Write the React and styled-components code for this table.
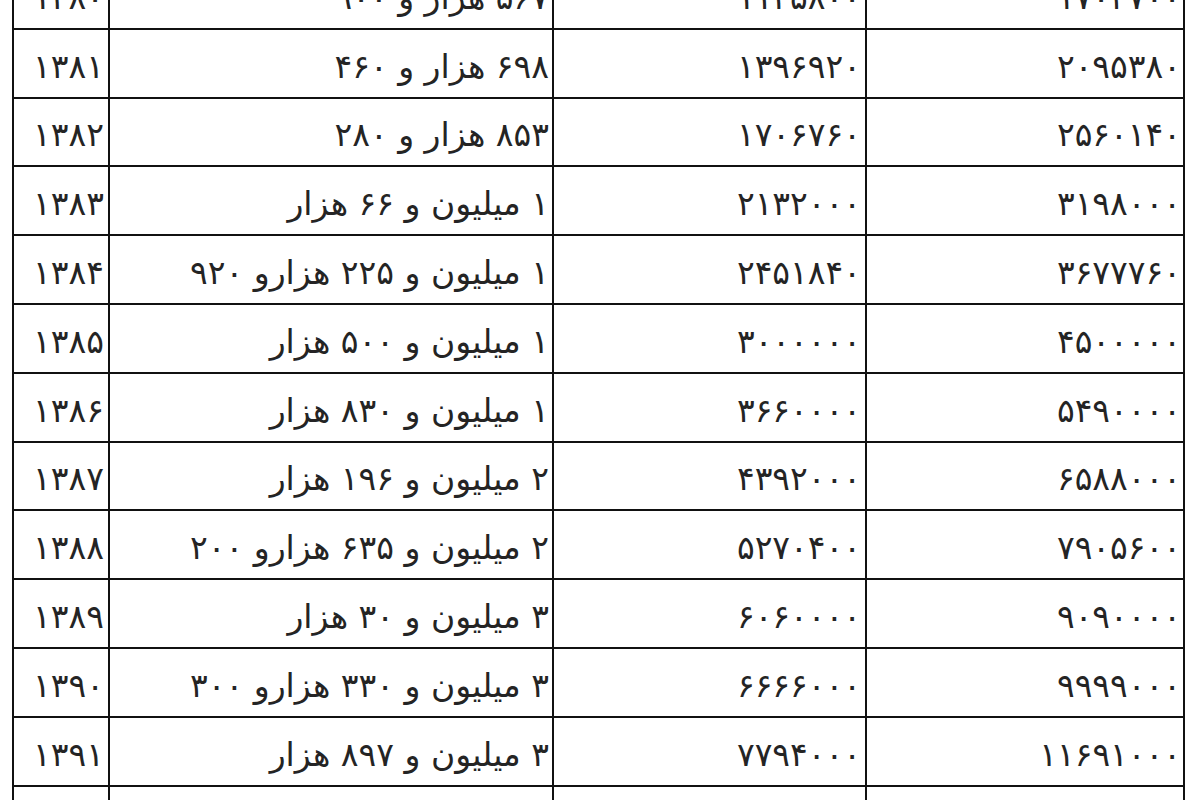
import React from "react";
import styled, { createGlobalStyle } from "styled-components";

const Global = createGlobalStyle`
  html, body { margin: 0; padding: 0; background: #fff; }
  body { width: 1200px; height: 800px; overflow: hidden; }
`;

const Page = styled.div`
  width: 1200px;
  height: 800px;
  overflow: hidden;
  background: #fff;
  padding-left: 12px;
  box-sizing: border-box;
`;

const Table = styled.table`
  margin-top: -41px;
  border-collapse: collapse;
  table-layout: fixed;
  width: 1172px;
  font-family: "DejaVu Sans", "Noto Sans", sans-serif;
  color: #242424;
`;

const Col = styled.col`
  width: ${(p) => p.$w}px;
`;

const Row = styled.tr`
  height: 68.8px;
`;

const Cell = styled.td`
  border: 2px solid #111;
  padding: 6px ${(p) => p.$pad || 4}px 0 0;
  text-align: right;
  direction: rtl;
  font-size: 33px;
  letter-spacing: ${(p) => (p.$num ? p.$ls : 0)}px;
  white-space: nowrap;
  overflow: hidden;
  vertical-align: middle;
  line-height: 1;
`;

const fa = (s) => String(s).replace(/\d/g, (d) => "۰۱۲۳۴۵۶۷۸۹"[d]);

const rows = [
  [1380, "۵۶۷ هزار و ۹۰۰", 1135800, 1703700],
  [1381, "۶۹۸ هزار و ۴۶۰", 1396920, 2095380],
  [1382, "۸۵۳ هزار و ۲۸۰", 1706760, 2560140],
  [1383, "۱ میلیون و ۶۶ هزار", 2132000, 3198000],
  [1384, "۱ میلیون و ۲۲۵ هزارو ۹۲۰", 2451840, 3677760],
  [1385, "۱ میلیون و ۵۰۰ هزار", 3000000, 4500000],
  [1386, "۱ میلیون و ۸۳۰ هزار", 3660000, 5490000],
  [1387, "۲ میلیون و ۱۹۶ هزار", 4392000, 6588000],
  [1388, "۲ میلیون و ۶۳۵ هزارو ۲۰۰", 5270400, 7905600],
  [1389, "۳ میلیون و ۳۰ هزار", 6060000, 9090000],
  [1390, "۳ میلیون و ۳۳۰ هزارو ۳۰۰", 6666000, 9999000],
  [1391, "۳ میلیون و ۸۹۷ هزار", 7794000, 11691000],
  [1392, "۴ میلیون و ۸۷۱ هزار و ۲۵۰", 9742500, 14613750],
];

export default function App() {
  return (
    <Page>
      <Global />
      <Table>
        <colgroup>
          <Col $w={96} />
          <Col $w={444} />
          <Col $w={313} />
          <Col $w={318} />
        </colgroup>
        <tbody>
          {rows.map((r) => (
            <Row key={r[0]}>
              <Cell $num $ls={5.5} $pad={0}>{fa(r[0])}</Cell>
              <Cell $pad={3}>{r[1]}</Cell>
              <Cell $num $ls={2.5} $pad={4}>{fa(r[2])}</Cell>
              <Cell $num $ls={4.5} $pad={2}>{fa(r[3])}</Cell>
            </Row>
          ))}
        </tbody>
      </Table>
    </Page>
  );
}
